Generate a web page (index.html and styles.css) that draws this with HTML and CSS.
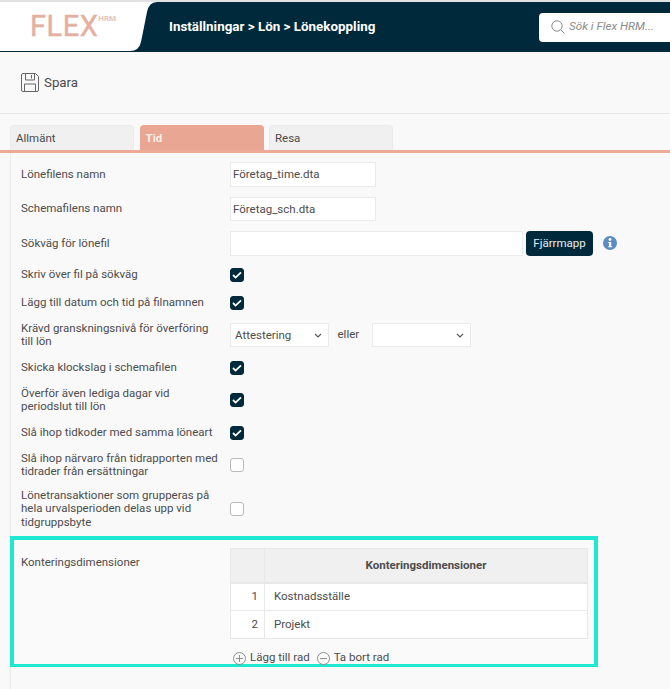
FILE: index.html
```html
<!DOCTYPE html>
<html lang="sv">
<head>
    <meta charset="UTF-8">
    <meta name="viewport" content="width=device-width, initial-scale=1.0">
    <title>Lönekoppling</title>
    <link rel="stylesheet" href="styles.css">
</head>
<body>
    <header class="topbar">
        <div class="logo">
            <svg class="logo-bg" width="160" height="50" viewBox="0 0 160 50"><path d="M0 0H157Q149 0 147 10L141 40Q139 49 130 49H0Z" fill="#fff"/></svg>
            <span class="logo-text">FLEX</span><span class="logo-sup">HRM</span>
        </div>
        <div class="breadcrumb">Inställningar &gt; Lön &gt; Lönekoppling</div>
        <div class="search">
            <svg width="14" height="14" viewBox="0 0 14 14" fill="none" stroke="#8a8a8a" stroke-width="1"><circle cx="6" cy="6" r="5.2"/><path d="M10 10l3.4 3.4"/></svg>
            <span>Sök i Flex HRM...</span>
        </div>
    </header>

    <div class="toolbar">
        <svg width="18" height="19" viewBox="0 0 18 19" fill="none" stroke="#666" stroke-width="1"><path d="M2 .5H14.5L17.5 3.500V17a1.500 1.500 0 0 1-1.500 1.500H2A1.500 1.500 0 0 1 .5 17V2A1.500 1.500 0 0 1 2 .5Z"/><path d="M4.500 .5V7H13.500V.5"/><path d="M10.500 2V5.500"/><path d="M3.500 18.500V11H14.500V18.500"/></svg>
        <span>Spara</span>
    </div>

    <nav class="tabs">
        <div class="tab">Allmänt</div>
        <div class="tab active">Tid</div>
        <div class="tab">Resa</div>
    </nav>

    <main class="content">
        <div class="row row-input">
            <label>Lönefilens namn</label>
            <input class="short" type="text" value="Företag_time.dta">
        </div>
        <div class="row row-input">
            <label>Schemafilens namn</label>
            <input class="short" type="text" value="Företag_sch.dta">
        </div>
        <div class="row row-input">
            <label>Sökväg för lönefil</label>
            <input class="long" type="text">
            <button class="btn" type="button">Fjärrmapp</button>
            <svg class="info" width="14" height="14" viewBox="0 0 14 14"><circle cx="7" cy="7" r="7" fill="#5b8cc4"/><circle cx="7" cy="3.500" r="1.400" fill="#fff"/><path d="M5.300 6H8.200V10.200H9V11.300H5.200V10.200H6V7.100H5.300Z" fill="#fff"/></svg>
        </div>
        <div class="row">
            <label>Skriv över fil på sökväg</label>
            <input type="checkbox" checked>
        </div>
        <div class="row">
            <label>Lägg till datum och tid på filnamnen</label>
            <input type="checkbox" checked>
        </div>
        <div class="row">
            <label>Krävd granskningsnivå för överföring till lön</label>
            <select><option>Attestering</option></select>
            <span class="or">eller</span>
            <select><option></option></select>
        </div>
        <div class="row">
            <label>Skicka klockslag i schemafilen</label>
            <input type="checkbox" checked>
        </div>
        <div class="row">
            <label>Överför även lediga dagar vid periodslut till lön</label>
            <input type="checkbox" checked>
        </div>
        <div class="row">
            <label>Slå ihop tidkoder med samma löneart</label>
            <input type="checkbox" checked>
        </div>
        <div class="row">
            <label>Slå ihop närvaro från tidrapporten med tidrader från ersättningar</label>
            <input type="checkbox">
        </div>
        <div class="row">
            <label>Lönetransaktioner som grupperas på hela urvalsperioden delas upp vid tidgruppsbyte</label>
            <input type="checkbox">
        </div>

        <section class="highlight">
            <label>Konteringsdimensioner</label>
            <div class="grid-wrap">
                <table>
                    <thead>
                        <tr><th class="num"></th><th>Konteringsdimensioner</th></tr>
                    </thead>
                    <tbody>
                        <tr><td class="num">1</td><td>Kostnadsställe</td></tr>
                        <tr><td class="num">2</td><td>Projekt</td></tr>
                    </tbody>
                </table>
                <div class="grid-actions">
                    <svg width="13" height="13" viewBox="0 0 13 13" fill="none" stroke="#8f8f8f"><circle cx="6.500" cy="6.500" r="6"/><path d="M6.500 3V10M3 6.500H10"/></svg>
                    <span class="add">Lägg till rad</span>
                    <svg width="13" height="13" viewBox="0 0 13 13" fill="none" stroke="#8f8f8f"><circle cx="6.500" cy="6.500" r="6"/><path d="M3 6.500H10"/></svg>
                    <span>Ta bort rad</span>
                </div>
            </div>
        </section>
    </main>
</body>
</html>
```

FILE: styles.css
```css
* {
    box-sizing: border-box;
}
html, body {
    height: 100%;
}
body {
    margin: 0;
    overflow: hidden;
    background: #f9f9f9;
    color: #4c4c4c;
    font-family: Roboto, "Liberation Sans", sans-serif;
    font-size: 11.5px;
    line-height: 13.5px;
}

.topbar {
    display: flex;
    align-items: center;
    height: 52px;
    border-top: 2px solid #e2e2e2;
    background: #002a3b;
    overflow: hidden;
}
.logo {
    position: relative;
    display: flex;
    align-items: flex-start;
    width: 169px;
    height: 50px;
    padding: 8px 0 0 30px;
    flex-shrink: 0;
}
.logo-bg {
    position: absolute;
    top: 0;
    left: 0;
}
.logo-text {
    position: relative;
    color: #e3b0a1;
    font-size: 29px;
    line-height: 32px;
    letter-spacing: .5px;
    -webkit-text-stroke: .4px #e3b0a1;
}
.logo-sup {
    position: relative;
    margin: 5px 0 0 0;
    color: #e6c3b8;
    font-size: 8px;
    font-weight: 700;
    line-height: 8px;
}
.breadcrumb {
    flex: 1;
    color: #fff;
    font-size: 13.4px;
    font-weight: 700;
}
.search {
    display: flex;
    align-items: center;
    gap: 4px;
    width: 140px;
    height: 29px;
    margin-right: -9px;
    padding-left: 12px;
    background: #fff;
    border-radius: 4px;
    color: #8a8a8a;
    font-size: 11.7px;
    font-style: italic;
}

.toolbar {
    display: flex;
    align-items: center;
    gap: 5px;
    height: 62px;
    padding-left: 21px;
    border-bottom: 1px solid #e8e8e8;
    font-size: 13.3px;
}

.tabs {
    display: flex;
    gap: 5.500px;
    margin-top: 11px;
    padding-left: 10px;
    border-bottom: 3px solid #efa997;
}
.tab {
    width: 124px;
    height: 24.500px;
    padding: 6px 0 0 5px;
    background: #f0f0f0;
    border: 1px solid #ebebeb;
    border-bottom: 0;
    border-radius: 4px 4px 0 0;
}
.tab.active {
    background: #e9a692;
    border-color: #e9a692;
    color: #fbeee9;
    font-weight: 700;
}

.content {
    height: 540px;
    margin-left: 10px;
    padding-top: 4.5px;
    border-left: 1px solid #ececec;
}
.row {
    display: flex;
    align-items: center;
    min-height: 28px;
    padding: 5px 0;
}
.row-input {
    height: 34.5px;
}
label {
    width: 200px;
    margin: 0 9px 0 10px;
    flex-shrink: 0;
}

input[type="text"], select {
    height: 24.500px;
    background-color: #fff;
    border: 1px solid #ebebeb;
    color: #4c4c4c;
    font-family: inherit;
    font-size: 11.5px;
}
input[type="text"] {
    padding: 0 2px;
}
.short {
    width: 146px;
}
.long {
    width: 293px;
}
select {
    width: 98.500px;
    padding: 0 0 0 4px;
    appearance: none;
    background-image: url("data:image/svg+xml,%3Csvg xmlns='http://www.w3.org/2000/svg' width='8' height='5'%3E%3Cpath d='M1 1l3 3 3-3' fill='none' stroke='%23555' stroke-width='1.100'/%3E%3C/svg%3E");
    background-repeat: no-repeat;
    background-position: right 6px center;
}
.or {
    width: 43.500px;
    padding-left: 9px;
}
input[type="checkbox"] {
    width: 14px;
    height: 14px;
    margin: 0;
    appearance: none;
    background: #fff;
    border: 1px solid #b9b9b9;
    border-radius: 3px;
}
input[type="checkbox"]:checked {
    border-color: #002a3b;
    background: #002a3b url("data:image/svg+xml,%3Csvg xmlns='http://www.w3.org/2000/svg' width='10' height='8'%3E%3Cpath d='M1 4l2.600 2.600L9 1.300' fill='none' stroke='%23fff' stroke-width='1.800'/%3E%3C/svg%3E") no-repeat center;
}
.btn {
    width: 67px;
    height: 25px;
    margin-left: 3px;
    padding: 0;
    background: #002a3b;
    border: 0;
    border-radius: 4px;
    color: #e8eef0;
    font-family: inherit;
    font-size: 11.5px;
}
.info {
    margin-left: 10px;
}

.highlight {
    display: flex;
    height: 131px;
    margin: 2px 72px 0 -1px;
    padding-top: 8px;
    background: #fafafa;
    border: 4px solid #1fe8d0;
    border-bottom-width: 3px;
}
.highlight label {
    margin: 8px 9px 0 7px;
}
.grid-wrap {
    width: 358px;
}
table {
    width: 100%;
    border-collapse: collapse;
    background: #fff;
    border: 1px solid #e8e8e8;
}
th, td {
    border: 1px solid #e8e8e8;
    padding: 0 9px;
    text-align: left;
}
th {
    height: 34px;
    background: #f0f0f0;
    border-bottom-width: 2px;
    text-align: center;
    font-weight: 700;
}
td {
    height: 28px;
}
.num {
    width: 34px;
    padding: 0 6px;
    text-align: right;
}
th.num {
    background: #f0f0f0;
}
.grid-actions {
    display: flex;
    align-items: center;
    gap: 4px;
    margin-top: 12px;
    padding-left: 3px;
    height: 14px;
}
.add {
    margin-right: 3px;
}
```
